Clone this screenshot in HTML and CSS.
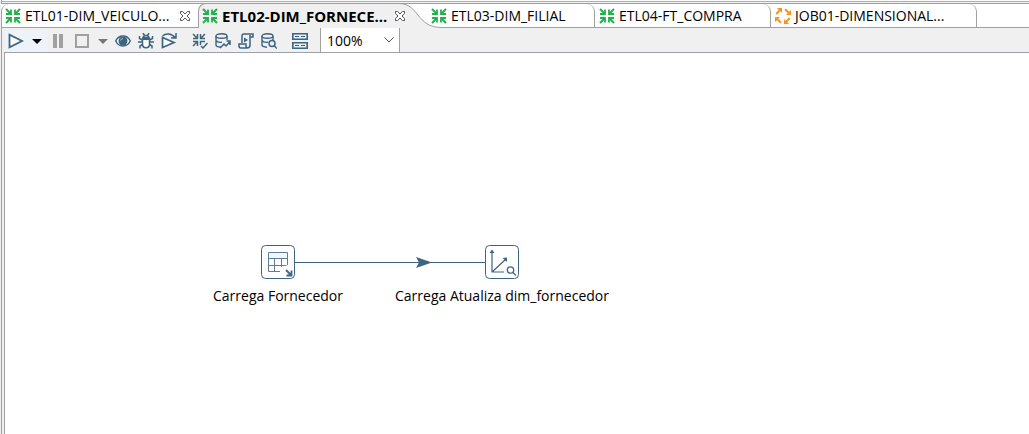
FILE: index.html
```html
<!DOCTYPE html>
<html lang="pt">
<head>
<meta charset="utf-8">
<title>ETL02-DIM_FORNECEDOR</title>
<link rel="stylesheet" href="styles.css">
</head>
<body>
<svg class="defs" aria-hidden="true">
  <symbol id="trans" viewBox="0 0 16 16">
    <g fill="none" stroke="currentColor" stroke-width="2">
      <path d="M1 1l5 5M15 1l-5 5M1 15l5-5M15 15l-5-5"/>
      <path d="M6 1.500v4.500h-5M10 1.500v4.500h5M6 14.500v-4.500h-5M10 14.500v-4.500h5" stroke-width="1.800"/>
    </g>
  </symbol>
  <symbol id="job" viewBox="0 0 16 16">
    <path fill="currentColor" d="M2 0h5v5L5.300 3.300 2 6.700.500 5.200 3.700 2zM16 2v5h-5l1.700-1.700L9.300 2l1.500-1.500L14 3.700zM14 16H9v-5l1.700 1.700L14 9.300l1.500 1.500L12.300 14zM0 14V9h5l-1.700 1.700L6.700 14l-1.500 1.500L2 12.300z"/>
  </symbol>
  <symbol id="close" viewBox="0 0 10 10">
    <path fill="#fff" stroke="#555" d="M.500.500h2L5 3 7.500.500h2v2L7 5l2.500 2.500v2h-2L5 7 2.500 9.500h-2v-2L3 5 .500 2.500z"/>
  </symbol>
  <symbol id="db" viewBox="0 0 16 16">
    <g fill="none" stroke="currentColor" stroke-width="1.400">
      <ellipse cx="6.500" cy="3" rx="5.500" ry="2.200"/>
      <path d="M1 3v9c0 1.200 2 2 5 2.200M1 7.500c1 1.500 4 2 6 1.700M12 3v4"/>
    </g>
  </symbol>
</svg>

<main class="editor">
  <div class="tabs" role="tablist">
    <div class="tab tab-first">
      <svg class="icon green"><use href="#trans"/></svg>
      <button class="tab-name" role="tab">ETL01-DIM_VEICULO...</button>
      <button class="tab-close" aria-label="Fechar"><svg><use href="#close"/></svg></button>
    </div>
    <div class="tab tab-active">
      <svg class="icon green"><use href="#trans"/></svg>
      <button class="tab-name" role="tab" aria-selected="true">ETL02-DIM_FORNECE...</button>
      <button class="tab-close" aria-label="Fechar"><svg><use href="#close"/></svg></button>
      <svg class="slope" viewBox="0 0 46 25">
        <path fill="#f0f0f0" d="M0 0c11 0 15 7 21 14s12 10.500 22 10.500H46V25H0z"/>
        <path fill="#fff" d="M0 0c11 0 15 7 21 14s12 10.500 22 10.500h3V0z"/>
        <path fill="none" stroke="#a0a0a0" d="M0 .500c11 0 15 7 21 14s12 10 22 10h3M0 .500h46"/>
      </svg>
    </div>
    <div class="tab tab-filial">
      <svg class="icon green"><use href="#trans"/></svg>
      <button class="tab-name" role="tab">ETL03-DIM_FILIAL</button>
    </div>
    <div class="tab tab-compra">
      <svg class="icon green"><use href="#trans"/></svg>
      <button class="tab-name" role="tab">ETL04-FT_COMPRA</button>
    </div>
    <div class="tab tab-job">
      <svg class="icon orange"><use href="#job"/></svg>
      <button class="tab-name" role="tab">JOB01-DIMENSIONAL...</button>
    </div>
  </div>

  <div class="toolbar" role="toolbar">
    <div class="group run">
      <button class="hot" aria-label="Executar"><svg class="icon" viewBox="0 0 16 16"><path fill="#fff" stroke="currentColor" stroke-width="1.800" d="M1.500 1.800v12.400L14 8z"/></svg></button>
      <button class="hot caret" aria-label="Opções de execução"><svg class="arrow" viewBox="0 0 10 5"><path fill="#000" d="M0 0h10L5 5z"/></svg></button>
      <button aria-label="Pausar"><svg class="icon" viewBox="0 0 16 16"><path fill="#a0a0a0" d="M3 1h4v14H3zM9 1h4v14H9z"/></svg></button>
      <button class="stop" aria-label="Parar"><svg class="icon" viewBox="0 0 16 16"><path fill="none" stroke="#a0a0a0" stroke-width="2" d="M2 2h12v12H2z"/></svg></button>
      <button class="stop-menu" aria-label="Opções de parada"><svg class="arrow" viewBox="0 0 10 5"><path fill="#777" d="M0 0h10L5 5z"/></svg></button>
    </div>
    <div class="group">
      <button aria-label="Visualizar"><svg class="icon" viewBox="0 0 16 16"><path fill="#fff" stroke="currentColor" stroke-width="1.500" d="M.700 8C4 1.300 12 1.300 15.300 8 12 14.700 4 14.700.700 8z"/><circle cx="8" cy="8" r="4.500" fill="currentColor"/><path fill="none" stroke="#b5cbd9" d="M5.500 7.500Q6 5.500 8 5.500"/></svg></button>
      <button aria-label="Depurar"><svg class="icon" viewBox="0 0 16 16"><g fill="none" stroke="currentColor" stroke-width="1.500"><path fill="#fff" d="M4.500 6h7v5c0 5-7 5-7 0z"/><path d="M5 5.500c0-4 6-4 6 0M5 0l1.500 2.500M11 0L9.500 2.500M4.500 7L1.500 5.500V3M11.500 7l3-1.500V3M0 9h4.500M11.500 9H16M4.500 11.500L2 13v2.500M11.500 11.500L14 13v2.500"/></g><path fill="currentColor" d="M4.500 4h7v3h-7z"/></svg></button>
      <button aria-label="Repetir"><svg class="icon" viewBox="0 0 16 16"><path fill="#fff" stroke="currentColor" stroke-width="1.700" d="M1.500 4.500v10L13 9.500z"/><path fill="none" stroke="currentColor" stroke-width="1.500" d="M1.500 3c3-3 9-3 12.500 1.500M15 0v5h-5"/></svg></button>
    </div>
    <div class="group">
      <button aria-label="Verificar"><svg class="icon" viewBox="0 0 16 16"><g fill="none" stroke="currentColor" stroke-width="1.500"><path d="M1 1l4 4M13 1L9 5M1 13l4-4M5.500 1v4.500H1M8.500 1v4.500H13M5.500 13V8.500H1M8.500 12V8.500H13M9 13l2 2 4.500-5"/></g></svg></button>
      <button aria-label="Analisar impacto"><svg class="icon" viewBox="0 0 16 16"><use href="#db"/><path fill="none" stroke="currentColor" stroke-width="1.500" d="M5 15l4-4 2 2 4-4.500M11.500 8H15v4"/></svg></button>
      <button aria-label="Obter SQL"><svg class="icon" viewBox="0 0 16 16"><path fill="none" stroke="currentColor" stroke-width="1.500" d="M4 10V3q0-2 2-2h9v3h-3v8q0 3-3 3H3q-2 0-2-2v-2h7v2q0 2 2 2M12 4V2"/><path fill="currentColor" d="M6 4.500v5L10 7z"/></svg></button>
      <button aria-label="Explorar banco de dados"><svg class="icon" viewBox="0 0 16 16"><use href="#db"/><g fill="none" stroke="currentColor" stroke-width="1.500"><circle cx="11" cy="10.500" r="3"/><path d="M13 12.500l3 3"/></g></svg></button>
    </div>
    <div class="group">
      <button aria-label="Mostrar resultados"><svg class="icon" viewBox="0 0 16 16"><path fill="#e4eef4" stroke="currentColor" stroke-width="1.600" d="M.800.800h14.400v5.400H.800zM.800 9.800h14.400v5.400H.800z"/><path stroke="currentColor" d="M3 3.500h4M9 3.500h4M3 12.500h4M9 12.500h4"/></svg></button>
    </div>
    <div class="zoom">
      <select aria-label="Zoom"><option>100%</option></select>
      <svg class="chevron" viewBox="0 0 10 6"><path fill="none" stroke="#555" d="M.500.500L5 5 9.500.500"/></svg>
    </div>
  </div>

  <div class="canvas">
    <svg class="hop" viewBox="0 0 190 12"><path stroke="#3d6480" d="M0 6.500h190"/><path fill="#3d6480" d="M121 1l16 5.500-16 5.500 3-5.500z"/></svg>
    <div class="step step-input">
      <svg class="step-box" viewBox="0 0 34 34">
        <rect x=".5" y=".5" width="33" height="33" rx="4" fill="#fff" stroke="#3d6480"/>
        <g fill="none" stroke="#5f7d93"><path fill="#f0f8fc" d="M7.500 7.500h19v6h-19z"/><path d="M26.500 13v7M7.500 13v13.500H19M7.500 20.500h18M13.500 14v12M20.500 14v8"/></g>
        <path fill="none" stroke="#3d6480" stroke-width="1.800" d="M25 25l5 5M30.500 25.500v5h-5"/>
      </svg>
      <span>Carrega Fornecedor</span>
    </div>
    <div class="step step-dimension">
      <svg class="step-box" viewBox="0 0 34 34">
        <rect x=".5" y=".5" width="33" height="33" rx="4" fill="#fff" stroke="#3d6480"/>
        <path fill="none" stroke="#3d6480" stroke-width="1.200" d="M7 6v21h12M7 27l14-13"/>
        <path fill="#3d6480" d="M7 4.500L9.500 8h-5zM22 12.500v4.500L17.500 13z"/>
        <g fill="none" stroke="#3d6480" stroke-width="1.300"><circle cx="25.500" cy="25" r="3.200"/><path d="M28 27.500l3 3"/></g>
      </svg>
      <span>Carrega Atualiza dim_fornecedor</span>
    </div>
  </div>
</main>
</body>
</html>
```
FILE: styles.css
```css
* { box-sizing: border-box; }

body {
  margin: 0;
  background: #f0f0f0;
  color: #000;
  font: 14px/20px "Open Sans", "Noto Sans", sans-serif;
}

button {
  display: flex;
  align-items: center;
  justify-content: center;
  margin: 0;
  padding: 0;
  border: 0;
  background: none;
  color: inherit;
  font: inherit;
}

svg { display: block; flex: none; }
.defs { position: absolute; width: 0; height: 0; }
.icon { width: 16px; height: 16px; }
.green { color: #22b14c; }
.orange { color: #f7941d; }

.editor {
  display: flex;
  flex-direction: column;
  min-height: 100vh;
  padding-top: 3px;
  border-left: 1px solid #f0f0f0;
  box-shadow: inset 1px 0 #a0a0a0, inset 0 1px #fafafa, inset 0 2px #b0b0b0;
}

.tabs {
  display: flex;
  height: 25px;
  background: #fff;
  border-top: 1px solid #a0a0a0;
  box-shadow: inset 0 -1px #a0a0a0;
}

.tab {
  position: relative;
  display: flex;
  flex: none;
  align-items: center;
  padding-left: 4px;
  gap: 4px;
  white-space: nowrap;
}

.tab-first {
  width: 197px;
  border-left: 1px solid #a0a0a0;
  border-top-left-radius: 8px;
  padding-left: 3px;
  padding-right: 8px;
}

.tab-active {
  width: 229px;
  margin-top: -1px;
  border: solid #a0a0a0;
  border-width: 1px 0 0 1px;
  border-top-left-radius: 8px;
  background: #f0f0f0;
  padding-left: 3px;
  padding-right: 22px;
  font-size: 15px;
  font-weight: 700;
}

.tab-filial,
.tab-compra,
.tab-job {
  border-right: 1px solid #a0a0a0;
  border-top-right-radius: 8px;
}

.tab-filial { width: 168px; }
.tab-compra { width: 176px; }
.tab-job { width: 206px; }

.tab-close { margin-left: auto; }
.tab-close svg { width: 10px; height: 10px; }

.slope {
  position: absolute;
  top: -1px;
  right: -18px;
  width: 46px;
  height: 25px;
}

.tab-active .tab-close { position: relative; z-index: 1; }

.toolbar {
  display: flex;
  align-items: center;
  gap: 15px;
  height: 24px;
  padding-left: 3px;
  margin-left: 1px;
  color: #3d6480;
}

.group { display: flex; align-items: center; gap: 7px; padding-top: 2px; }
.run { gap: 0; margin-right: -11px; }
.run button { width: 22px; height: 22px; }
.run .hot { background: #edf3f8; }
.run .caret { width: 20px; }
.run .stop { width: 26px; }
.run .stop-menu { width: 16px; }
.run .arrow { width: 10px; height: 5px; }

.zoom {
  display: grid;
  align-items: center;
  width: 80px;
  height: 24px;
  margin-left: -3px;
  border: solid #a0a0a0;
  border-width: 0 1px;
  background: #fff;
}

.zoom select,
.zoom .chevron { grid-area: 1 / 1; }

.zoom select {
  appearance: none;
  width: 100%;
  height: 24px;
  padding: 2px 6px 0;
  border: 0;
  background: none;
  color: #000;
  font: inherit;
}

.zoom .chevron {
  justify-self: end;
  width: 10px;
  height: 6px;
  margin-right: 5px;
  pointer-events: none;
}

.canvas {
  position: relative;
  flex: 1;
  margin-left: 3px;
  border: solid #a0a0a8;
  border-width: 1px 0 0 1px;
  background: #fff;
}

.step {
  position: absolute;
  top: 192px;
  display: flex;
  flex-direction: column;
  align-items: center;
  gap: 7px;
  width: 240px;
  white-space: nowrap;
}

.step-box { width: 34px; height: 34px; }
.step-input { left: 153px; }
.step-dimension { left: 377px; }

.hop {
  position: absolute;
  left: 290px;
  top: 203px;
  width: 190px;
  height: 12px;
}
```
